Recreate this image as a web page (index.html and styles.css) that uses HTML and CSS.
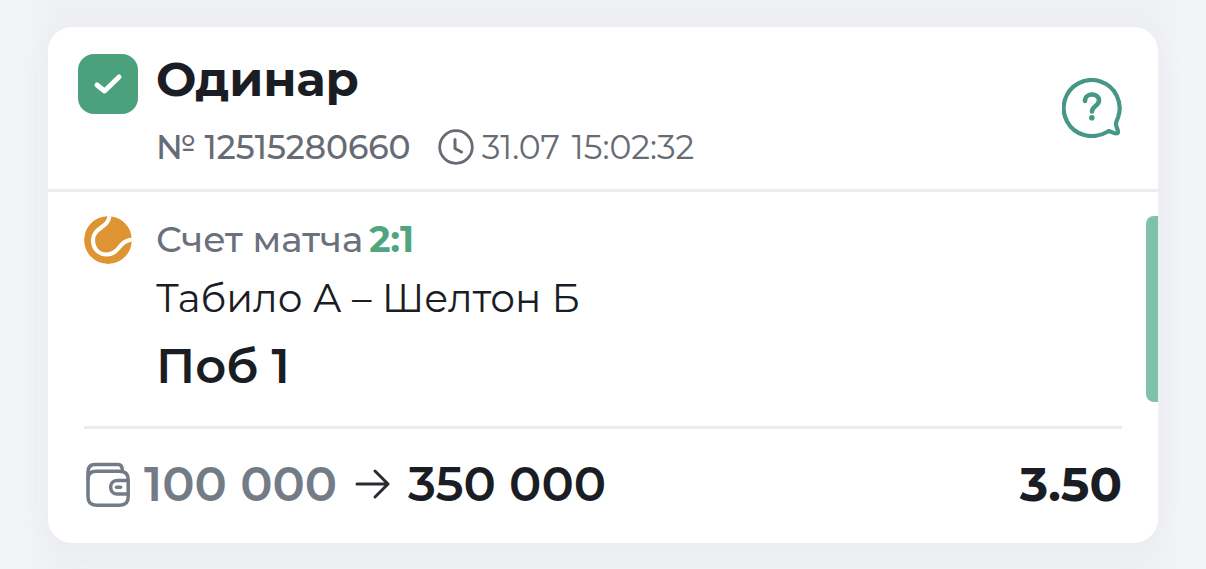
FILE: index.html
```html
<!DOCTYPE html>
<html lang="ru">
<head>
    <meta charset="UTF-8">
    <meta name="viewport" content="width=device-width, initial-scale=1.0">
    <title>Одинар</title>
    <link rel="stylesheet" href="styles.css">
</head>
<body>

<article class="card">
    <header class="card-header">
        <div class="check">
            <input type="checkbox" id="single" class="check-input" checked>
            <svg class="check-mark" viewBox="0 0 60 60" fill="none" stroke="#fff" stroke-width="5" stroke-linecap="round" stroke-linejoin="round">
                <path d="M19 31L26.500 37L41 23"/>
            </svg>
        </div>
        <div class="heading">
            <label for="single" class="title">Одинар</label>
            <div class="meta">
                <span class="number">№ 12515280660</span>
                <svg class="clock" viewBox="0 0 36 36" fill="none" stroke="#666b74" stroke-linecap="round" stroke-linejoin="round">
                    <circle cx="18" cy="18" r="16.300" stroke-width="2.800"/>
                    <path d="M17 10.500V19.500L23.500 23" stroke-width="3"/>
                </svg>
                <time class="date"><span>31.07</span> <span>15:02:32</span></time>
            </div>
        </div>
        <button type="button" class="help" aria-label="Помощь">
            <svg class="help-icon" viewBox="0 0 60 60" fill="none" stroke="#459885" stroke-linecap="round" stroke-linejoin="round">
                <path d="M46.500 53.200C40 57 31 59.500 22 57A28 28 0 1 1 56 39.500C55 42 53.800 44 54 46.500C54.200 49 56 51.500 56 54C56 55.500 54.500 55.500 52 55C50 54.500 48.500 53.200 46.500 53.200" stroke-width="4.200"/>
                <path d="M23 23C23 14.500 37 14.500 37 22.500C37 28 30 28 30 33.500" stroke-width="4.600"/>
                <circle cx="29.800" cy="39.800" r="2.800" fill="#459885" stroke="none"/>
            </svg>
        </button>
    </header>

    <section class="event">
        <svg class="ball" viewBox="0 0 48 48">
            <circle cx="24" cy="24" r="24" fill="#df9433"/>
            <path d="M25.500 -1C25.500 12 9 11 9 24C9 33 15 38.500 22.500 38.500C36 38.500 34 24.500 49 23.500" fill="none" stroke="#fff" stroke-width="4.200"/>
        </svg>
        <div class="event-info">
            <p class="score">Счет матча <b class="score-value">2:1</b></p>
            <p class="teams">Табило А – Шелтон Б</p>
            <p class="pick">Поб 1</p>
        </div>
        <div class="win-mark"></div>
    </section>

    <footer class="sum">
        <svg class="wallet" viewBox="0 0 48 48" fill="none" stroke="#737b86" stroke-width="3.500" stroke-linecap="round" stroke-linejoin="round">
            <path d="M4 19C4 13 7.500 11.300 12.500 11.300H35.700Q44.200 11.300 44.200 19.800V36.700Q44.200 45.200 35.700 45.200H12.500Q4 45.200 4 36.700Z"/>
            <path d="M4 19V12Q4 4.600 11 4.600H34Q38.400 4.600 38.400 11"/>
            <path d="M44 20.500H33C24.500 20.500 24.500 34 33 34H44"/>
            <path d="M32.500 27.200H36.500"/>
        </svg>
        <span class="stake">100 000</span>
        <svg class="arrow" viewBox="0 0 36 36" fill="none" stroke="#2a2c31" stroke-width="3" stroke-linecap="round" stroke-linejoin="round">
            <path d="M2 18H33M20 5L33 18L20 31"/>
        </svg>
        <span class="payout">350 000</span>
        <span class="odds">3.50</span>
    </footer>
</article>

</body>
</html>
```
FILE: styles.css
```css
* {
    box-sizing: border-box;
}

body {
    margin: 0;
    padding: 27px 48px 26px;
    background: linear-gradient(to right, #f3f4f6 20px, #eff0f3 60px, #eff0f3 calc(100% - 60px), #f3f4f6 calc(100% - 20px));
    font-family: Montserrat, Inter, sans-serif;
    color: #1b1d24;
}

p {
    margin: 0;
}

svg {
    display: block;
    flex-shrink: 0;
}

.card {
    background: #fff;
    border-radius: 24px;
    box-shadow: 0 4px 24px rgba(225, 227, 234, 0.4);
}

.card-header {
    display: flex;
    align-items: flex-start;
    padding: 22px 36px 22px 30px;
    border-bottom: 3px solid #ecedf1;
}

.check {
    display: grid;
    width: 60px;
    height: 60px;
    margin: 5px 18px 0 0;
}

.check-input,
.check-mark {
    grid-area: 1 / 1;
    width: 60px;
    height: 60px;
    margin: 0;
}

.check-input {
    appearance: none;
    background: #4aa17b;
    border-radius: 16px;
}

.check-mark {
    pointer-events: none;
}

.heading {
    flex: 1;
}

.title {
    display: block;
    font-size: 48px;
    line-height: 60px;
    font-weight: 700;
}

.meta {
    display: flex;
    align-items: center;
    margin-top: 18px;
    font-size: 33px;
    line-height: 40px;
    color: #666b74;
}

.number {
    font-weight: 500;
}

.clock {
    width: 36px;
    height: 36px;
    margin: 0 8px 0 27px;
}

.date {
    display: flex;
    gap: 12px;
}

.help {
    align-self: center;
    padding: 0;
    border: 0;
    background: none;
    cursor: pointer;
}

.help-icon {
    width: 60px;
    height: 60px;
}

.event {
    display: flex;
    align-items: flex-start;
    padding: 24px 0 24px 36px;
}

.ball {
    width: 48px;
    height: 48px;
    margin-right: 24px;
    border-radius: 50%;
}

.event-info {
    flex: 1;
    padding-bottom: 6px;
}

.score {
    display: flex;
    gap: 6px;
    font-size: 36px;
    line-height: 46px;
    font-weight: 500;
    color: #6b717c;
}

.score-value {
    font-weight: 700;
    color: #4fa580;
}

.teams {
    margin-top: 12px;
    font-size: 39px;
    line-height: 48px;
}

.pick {
    margin-top: 14px;
    font-size: 48px;
    line-height: 60px;
    font-weight: 600;
}

.win-mark {
    align-self: stretch;
    width: 12px;
    background: #7fc2aa;
    border-radius: 8px 0 0 8px;
}

.sum {
    display: flex;
    align-items: center;
    margin: 0 36px;
    padding: 25px 0 29px;
    border-top: 3px solid #ececef;
    font-size: 48px;
    line-height: 60px;
    font-weight: 600;
}

.wallet {
    width: 48px;
    height: 48px;
    margin-right: 12px;
}

.stake {
    color: #737b86;
}

.arrow {
    width: 36px;
    height: 36px;
    margin: 0 17px 0 18px;
}

.odds {
    margin-left: auto;
    font-weight: 700;
}
```
